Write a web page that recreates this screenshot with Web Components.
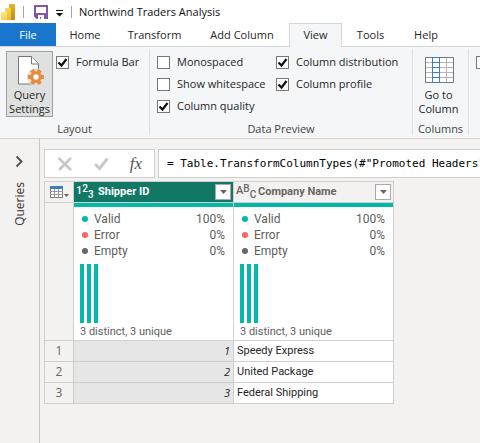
<!DOCTYPE html>
<html lang="en">
<head>
<meta charset="utf-8">
<title>Northwind Traders Analysis</title>
<style>
html, body { height: 100%; margin: 0; }
body { overflow: hidden; font: 11px/16px "Open Sans", "Noto Sans", sans-serif; color: #262626; background: #f3f2f0; }
</style>
</head>
<body>
<query-editor></query-editor>
<script>
function define(name, html, setup) {
  const tpl = document.createElement('template');
  tpl.innerHTML = html;
  customElements.define(name, class extends HTMLElement {
    connectedCallback() {
      if (this.shadowRoot) return;
      const root = this.attachShadow({ mode: 'open' });
      root.append(tpl.content.cloneNode(true));
      if (setup) setup(this, root);
    }
  });
}

define('title-bar', `
<style>
:host { display: flex; align-items: center; height: 23px; background: #fff; color: #111; font-size: 11px; }
.logo { margin-left: 1px; }
i { width: 1px; height: 12px; background: #a6a6a6; }
button { border: 0; padding: 0; background: none; display: flex; }
.logo + i { margin: 0 10px 0 7px; }
.menu { margin: 2px 8px 0 8px; }
h1 { font: inherit; margin: 0 0 0 7px; white-space: nowrap; }
</style>
<svg class="logo" width="15" height="18" viewBox="0 0 15 18" aria-hidden="true">
  <defs>
    <linearGradient id="a" x2="0" y2="1"><stop stop-color="#e8b02c"/><stop offset="1" stop-color="#c98a10"/></linearGradient>
    <linearGradient id="b" x2="0" y2="1"><stop stop-color="#f7d558"/><stop offset="1" stop-color="#eaba35"/></linearGradient>
    <linearGradient id="c" x2="0" y2="1"><stop stop-color="#fbe88a"/><stop offset="1" stop-color="#f4cf55"/></linearGradient>
  </defs>
  <rect x="8" y="1" width="6" height="16" rx="1" fill="url(#a)"/>
  <rect x="4" y="5" width="6" height="12" rx="1" fill="url(#b)"/>
  <rect x="0" y="9" width="6" height="8" rx="1" fill="url(#c)"/>
</svg>
<i></i>
<button aria-label="Save"><svg width="14" height="14" viewBox="0 0 14 14"><path d="M1 1h12v12H3l-2-2z" fill="#fff" stroke="#8257ab" stroke-width="2"/><path d="M1 8h12v5H1z" fill="#8257ab"/><path d="M4 10h6v4H7v-2H6v2H4z" fill="#fff"/></svg></button>
<button class="menu" aria-label="Customize quick access toolbar"><svg width="7" height="8" viewBox="0 0 7 8"><path d="M0 1h7v1H0zM0 4h7L3.500 7.500z" fill="#111"/></svg></button>
<i></i>
<h1>Northwind Traders Analysis</h1>`);

define('ribbon-tab', `
<style>
:host { display: block; }
button { width: 100%; height: 24px; padding: 0 0 1px; border: 1px solid transparent; border-bottom: 0; background: none; font: inherit; color: inherit; white-space: nowrap; }
:host([file]) button { background: #1976cc; color: #fff; height: 23px; padding: 0; }
:host([selected]) button { background: #f4f6f8; border-color: #d5d6d8; }
</style>
<button role="tab"><slot></slot></button>`, (el, root) => {
  root.querySelector('button').setAttribute('aria-selected', el.hasAttribute('selected'));
});

define('tab-strip', `
<style>
:host { display: block; background: #fff; }
nav { display: grid; grid-template-columns: 56px 58px 81px 94px 53px 57px 54px; height: 24px; background: linear-gradient(#d5d6d8, #d5d6d8) bottom / 100% 1px no-repeat; }
</style>
<nav role="tablist"><slot></slot></nav>`);

define('check-option', `
<style>
:host { display: block; height: 22px; }
label { display: flex; align-items: center; gap: 7px; height: 22px; white-space: nowrap; }
.box { display: grid; flex: none; }
.box > * { grid-area: 1 / 1; }
input { appearance: none; box-sizing: border-box; margin: 0; width: 13px; height: 13px; border: 1px solid #777; background: #fff; }
svg { display: none; pointer-events: none; }
input:checked + svg { display: block; }
</style>
<label><span class="box"><input type="checkbox"><svg width="13" height="13" viewBox="0 0 13 13"><path d="M2.500 6.500L5.500 9.500L10.500 3" fill="none" stroke="#111" stroke-width="2.200"/></svg></span><slot></slot></label>`, (el, root) => {
  const input = root.querySelector('input');
  input.checked = el.hasAttribute('checked');
  if (el.hasAttribute('label')) input.setAttribute('aria-label', el.getAttribute('label'));
});

define('ribbon-button', `
<style>
:host { display: block; }
button { box-sizing: border-box; width: 47px; height: 66px; padding: 4px 0 0; border: 1px solid transparent; background: none; font: inherit; line-height: 14px; color: inherit; display: flex; flex-direction: column; align-items: center; gap: 2px; white-space: nowrap; }
:host([pressed]) button { background: #dfe1e1; border-color: #a1a1a1; }
.icon { height: 30px; display: flex; }
</style>
<button><span class="icon"><slot name="icon"></slot></span><span><slot></slot></span></button>`);

define('ribbon-group', `
<style>
:host { display: flex; flex-direction: column; height: 86px; border-right: 1px solid #dcdee0; }
.content { display: flex; align-items: flex-start; flex: 1; padding-top: 2px; }
footer { text-align: center; color: #444; line-height: 12px; height: 12px; white-space: nowrap; }
</style>
<div class="content"><slot></slot></div><footer></footer>`, (el, root) => {
  root.querySelector('footer').textContent = el.getAttribute('caption') || '';
});

define('view-ribbon', `
<style>
:host { display: block; background: #f4f6f8; border-bottom: 1px solid #d5d6d8; overflow: hidden; }
.row { display: grid; grid-template-columns: 150px 263px 56px 1fr; padding: 2px 0 3px; }
.one { padding: 0 6px; display: flex; gap: 3px; }
.two { display: grid; grid-template-columns: 119px 1fr; padding-left: 7px; }
.go { padding-left: 2px; }
.more { padding-left: 7px; border: 0; }
</style>
<div class="row">
  <ribbon-group caption="Layout">
    <div class="one">
      <ribbon-button pressed>
        <svg slot="icon" width="28" height="30" viewBox="0 0 28 30">
          <path d="M3 .5h12.500L22.500 7.500V28H2.500V.5z" fill="#fff" stroke="#777"/>
          <path d="M15.500 .5V8h7" fill="#fff" stroke="#777"/>
          <g transform="translate(20 21)">
            <circle r="9" fill="#dfe1e1"/>
            <g stroke="#e88a3a" stroke-width="4"><path d="M-8 0H8"/><path d="M-8 0H8" transform="rotate(60)"/><path d="M-8 0H8" transform="rotate(120)"/></g>
            <circle r="4.200" fill="#fff" stroke="#e88a3a" stroke-width="3"/>
          </g>
        </svg>Query<br>Settings</ribbon-button>
      <check-option checked>Formula Bar</check-option>
    </div>
  </ribbon-group>
  <ribbon-group caption="Data Preview">
    <div class="two">
      <div><check-option>Monospaced</check-option><check-option>Show whitespace</check-option><check-option checked>Column quality</check-option></div>
      <div><check-option checked>Column distribution</check-option><check-option checked>Column profile</check-option></div>
    </div>
  </ribbon-group>
  <ribbon-group caption="Columns">
    <ribbon-button class="go">
      <svg slot="icon" width="30" height="28" viewBox="0 0 30 28">
        <path d="M1.500 1.500h27v25h-27z" fill="#fff"/>
        <path d="M1 6.500h28M1 11.500h28M1 16.500h28M1 21.500h28M22.500 1v26" stroke="#b5b5b5" fill="none"/>
        <path d="M1.500 1.500h28v25h-28z" stroke="#777" fill="none"/>
        <path d="M8.500 1.500h7v25h-7zM8 6.500h7M8 11.500h7M8 16.500h7M8 21.500h7" stroke="#3f7fc1" fill="none"/>
      </svg>Go to<br>Column</ribbon-button>
  </ribbon-group>
  <ribbon-group class="more"><check-option label="More options"></check-option></ribbon-group>
</div>`);

define('queries-pane', `
<style>
:host { display: block; border-right: 1px solid #c8c8c8; }
button { display: flex; flex-direction: column; align-items: center; gap: 14px; width: 100%; padding: 16px 0 0; border: 0; background: none; font: inherit; font-size: 12px; color: #333; }
span { writing-mode: vertical-rl; transform: rotate(180deg); }
</style>
<button aria-expanded="false"><svg width="9" height="13" viewBox="0 0 9 13"><path d="M1.500 1.500L6.500 6.500L1.500 11.500" fill="none" stroke="#555" stroke-width="2"/></svg><span>Queries</span></button>`);

define('formula-bar', `
<style>
:host { display: grid; grid-template-columns: 111px 1fr; gap: 3px; height: 29px; }
.tools, input { box-sizing: border-box; height: 29px; border: 1px solid #cfcfcf; background: #fff; }
.tools { display: flex; justify-content: space-between; padding: 0 12px 0 12px; }
button { border: 0; padding: 0; background: none; display: flex; align-items: center; color: #555; font: italic 17px/20px "Liberation Serif", serif; }
input { width: 100%; min-width: 0; border-right: 0; padding: 0 0 0 8px; font: 11px "DejaVu Sans Mono", monospace; color: #000; border-radius: 0; outline: 0; }
</style>
<div class="tools">
  <button aria-label="Cancel"><svg width="16" height="14" viewBox="0 0 16 14"><path d="M1.500 1L14 13M14 1L2 13" stroke="#c8c8c8" stroke-width="2.600" fill="none"/></svg></button>
  <button aria-label="Commit"><svg width="15" height="14" viewBox="0 0 15 14"><path d="M1 7L5.500 11.500L13.500 1.500" stroke="#c8c8c8" stroke-width="3" fill="none"/></svg></button>
  <button aria-label="Insert function"><em>fx</em></button>
</div>
<input aria-label="Formula" value='= Table.TransformColumnTypes(#"Promoted Headers"'>`);

define('column-header', `
<style>
:host { display: flex; align-items: center; height: 20px; padding: 0 2px 0 2px; background: #f3f2f0; color: #666; font: 700 11px/16px Roboto, sans-serif; }
:host([selected]) { background: #117865; color: #fff; }
span { flex: 1; padding-left: 6px; white-space: nowrap; text-align: left; }
.type { font: 500 11px/12px Roboto, sans-serif; width: 16px; white-space: nowrap; display: flex; }
.type b { font-weight: 500; }
.type b:nth-child(1) { padding-top: 2px; }
.type b:nth-child(2) { padding-bottom: 4px; font-size: 10px; }
.type b:nth-child(3) { padding-top: 6px; font-size: 10px; }
button { box-sizing: border-box; width: 16px; height: 16px; border: 1px solid #aaa; padding: 0; background: #fff; display: grid; place-items: center; }
</style>
<div class="type"></div><span><slot></slot></span><button aria-label="Filter"><svg width="7" height="4" viewBox="0 0 7 4"><path d="M0 0h7L3.500 4z" fill="#666"/></svg></button>`, (el, root) => {
  const type = root.querySelector('.type');
  for (const ch of el.getAttribute('type')) {
    const b = document.createElement('b');
    b.textContent = ch;
    type.append(b);
  }
});

define('quality-row', `
<style>
:host { display: flex; align-items: center; height: 16px; }
i { width: 6px; height: 6px; border-radius: 50%; background: var(--dot); margin-right: 6px; }
b { font-weight: 400; margin-left: auto; }
</style>
<i></i><slot></slot><b></b>`, (el, root) => {
  root.querySelector('b').textContent = el.getAttribute('value');
});

define('column-profile', `
<style>
:host { display: block; border-top: 4px solid #01b8aa; padding: 4px 8px 0; font: 12px/16px Roboto, sans-serif; color: #605e5c; height: 129px; text-align: left; }
.bars { display: flex; gap: 3px; padding: 5px 0 0; margin-left: -2px; }
.bars i { width: 4px; height: 59px; background: #01b8aa; }
p { margin: 1px 0 0 -2px; font-size: 11px; white-space: nowrap; }
</style>
<quality-row value="100%" style="--dot:#01b8aa">Valid</quality-row>
<quality-row value="0%" style="--dot:#fd625e">Error</quality-row>
<quality-row value="0%" style="--dot:#666">Empty</quality-row>
<div class="bars"><i></i><i></i><i></i></div>
<p>3 distinct, 3 unique</p>`);

define('data-grid', `
<style>
:host { display: block; }
table { table-layout: fixed; width: 350px; border-collapse: separate; border-spacing: 0; border: solid #cfcfcf; border-width: 1px 0 0 1px; }
th, td { box-sizing: border-box; border: solid #cfcfcf; border-width: 0 1px 1px 0; padding: 0; height: 21px; background: #fff; font-weight: 400; line-height: 20px; text-align: left; overflow: hidden; }
.index { background: #f3f2f0; color: #666; text-align: center; font-size: 12px; }
.num { background: #e6e6e6; text-align: right; font-style: italic; padding-right: 3px; }
.text { padding-left: 3px; font-family: Roboto, sans-serif; }
.profile td { height: 138px; vertical-align: top; }
button { display: flex; align-items: center; gap: 1px; border: 0; padding: 0 0 0 5px; background: none; height: 20px; }
</style>
<table>
  <colgroup><col style="width:29px"><col><col></colgroup>
  <thead>
    <tr><th class="index"><button aria-label="Table menu"><svg width="20" height="12" viewBox="0 0 20 12"><path d="M.5 .5h12v11H.5z" fill="#fff" stroke="#777"/><path d="M0 0h13v3H0z" fill="#3f7fc1"/><path d="M0 5.500h13M0 8.500h13M4.500 3v9M8.500 3v9" stroke="#999"/><path d="M14 8h5l-2.500 3z" fill="#666"/></svg></button></th>
    <th><column-header type="123" selected>Shipper ID</column-header></th>
    <th><column-header type="ABC">Company Name</column-header></th></tr>
  </thead>
  <tbody>
    <tr class="profile"><td class="index"></td><td><column-profile></column-profile></td><td><column-profile></column-profile></td></tr>
    <tr><th class="index" scope="row">1</th><td class="num">1</td><td class="text">Speedy Express</td></tr>
    <tr><th class="index" scope="row">2</th><td class="num">2</td><td class="text">United Package</td></tr>
    <tr><th class="index" scope="row">3</th><td class="num">3</td><td class="text">Federal Shipping</td></tr>
  </tbody>
</table>`);

define('query-editor', `
<style>
:host { display: flex; flex-direction: column; min-height: 100%; }
main { flex: 1; display: grid; grid-template-columns: 40px 1fr; }
section { display: flex; flex-direction: column; gap: 3px; padding: 10px 0 0 4px; min-width: 0; }
:host { height: 100%; }
</style>
<title-bar></title-bar>
<tab-strip><ribbon-tab file>File</ribbon-tab><ribbon-tab>Home</ribbon-tab><ribbon-tab>Transform</ribbon-tab><ribbon-tab>Add Column</ribbon-tab><ribbon-tab selected>View</ribbon-tab><ribbon-tab>Tools</ribbon-tab><ribbon-tab>Help</ribbon-tab></tab-strip>
<view-ribbon></view-ribbon>
<main><queries-pane></queries-pane><section><formula-bar></formula-bar><data-grid></data-grid></section></main>`);
</script>
</body>
</html>
